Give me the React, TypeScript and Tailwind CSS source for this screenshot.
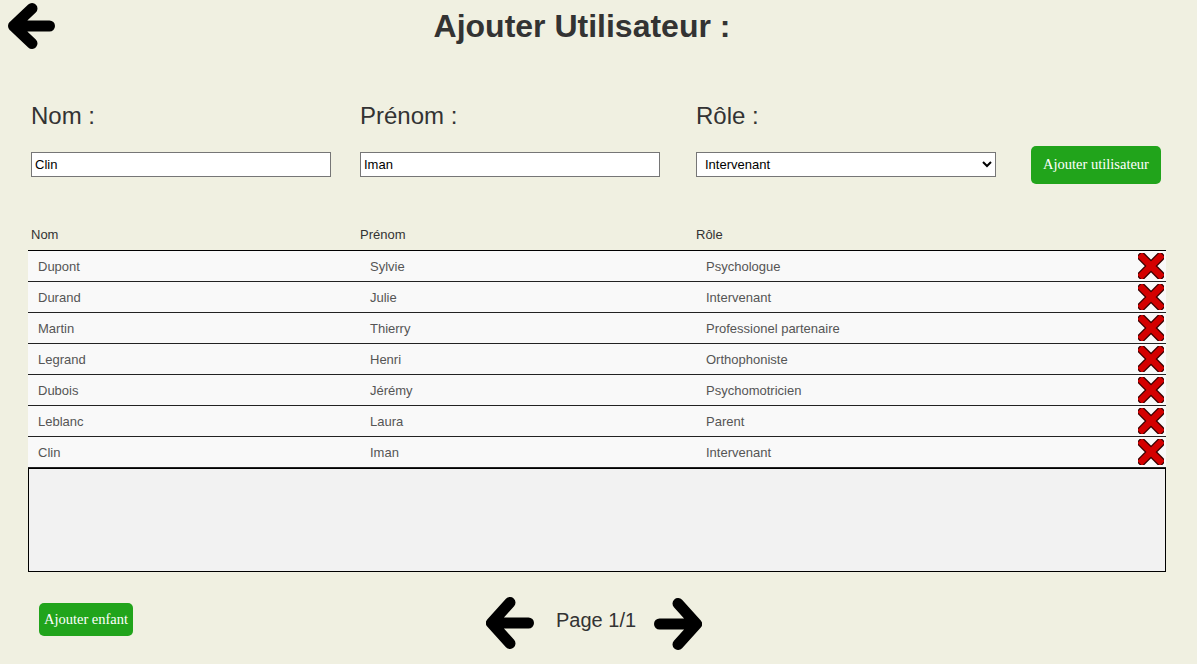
import React from "react";

const TopArrow = () => (
  <svg viewBox="0 0 60 54" className="w-[60px] h-[54px] shrink-0" fill="none">
    <path
      d="M49.5 26 H13.5 M32 8.5 L13.5 26 L32 43.5"
      stroke="#000"
      strokeWidth="11"
      strokeLinecap="round"
      strokeLinejoin="round"
    />
  </svg>
);

const NavLeft = () => (
  <svg viewBox="0 0 48 52" className="w-[48px] h-[52px] shrink-0" fill="none">
    <path
      d="M42.5 26 H5.5 M24 5.5 L5.5 26 L24 46.5"
      stroke="#000"
      strokeWidth="11"
      strokeLinecap="round"
      strokeLinejoin="round"
    />
  </svg>
);

const NavRight = () => (
  <svg viewBox="0 0 48 52" className="w-[48px] h-[52px] shrink-0" fill="none">
    <path
      d="M5.5 26 H42.5 M24 5.5 L42.5 26 L24 46.5"
      stroke="#000"
      strokeWidth="11"
      strokeLinecap="round"
      strokeLinejoin="round"
    />
  </svg>
);

const RedX = () => (
  <svg viewBox="0 0 26 26" className="w-[26px] h-[26px]">
    <path d="M4 4 L22 22 M22 4 L4 22" stroke="#3a0000" strokeWidth="9" strokeLinecap="square" />
    <path d="M4 4 L22 22 M22 4 L4 22" stroke="#d40000" strokeWidth="6.5" strokeLinecap="square" />
  </svg>
);

const users = [
  ["Dupont", "Sylvie", "Psychologue"],
  ["Durand", "Julie", "Intervenant"],
  ["Martin", "Thierry", "Professionel partenaire"],
  ["Legrand", "Henri", "Orthophoniste"],
  ["Dubois", "Jérémy", "Psychomotricien"],
  ["Leblanc", "Laura", "Parent"],
  ["Clin", "Iman", "Intervenant"],
];

export default function App() {
  const sans = { fontFamily: '"Liberation Sans", Arial, sans-serif' };
  const serif = { fontFamily: '"Liberation Serif", "Times New Roman", serif' };
  return (
    <div className="w-[1197px] h-[664px] bg-[#f0f0e1] overflow-hidden" style={sans}>
      {/* Header */}
      <div className="flex items-start h-[60px]">
        <TopArrow />
        <div className="flex-1 flex justify-center pr-[93px]">
          <h1 className="text-[32px] font-bold text-[#333] leading-[37px] mt-[8px]">
            Ajouter Utilisateur :
          </h1>
        </div>
      </div>

      {/* Form */}
      <div className="flex pl-[31px] mt-[42px] text-[#333]">
        <div className="w-[329px]">
          <div className="text-[24px] leading-[28px]">Nom :</div>
          <input
            defaultValue="Clin"
            className="mt-[22px] w-[300px] h-[25px] bg-white border border-[#767676] px-[3px] text-[13px] text-black outline-none"
          />
        </div>
        <div className="w-[336px]">
          <div className="text-[24px] leading-[28px]">Prénom :</div>
          <input
            defaultValue="Iman"
            className="mt-[22px] w-[300px] h-[25px] bg-white border border-[#767676] px-[3px] text-[13px] text-black outline-none"
          />
        </div>
        <div className="w-[335px]">
          <div className="text-[24px] leading-[28px]">Rôle :</div>
          <select
            defaultValue="Intervenant"
            className="mt-[22px] w-[300px] h-[25px] bg-white border border-[#767676] pl-[4px] text-[13px] text-black outline-none"
          >
            <option>Psychologue</option>
            <option>Intervenant</option>
            <option>Professionel partenaire</option>
            <option>Orthophoniste</option>
            <option>Psychomotricien</option>
            <option>Parent</option>
          </select>
        </div>
        <div className="flex items-end">
          <button
            className="h-[38px] w-[130px] mb-[-7px] rounded-[5px] bg-[#21a41b] text-white text-[14.5px]"
            style={serif}
          >
            Ajouter utilisateur
          </button>
        </div>
      </div>

      {/* Table */}
      <div className="ml-[28px] w-[1138px] mt-[47px]">
        <div className="flex pl-[3px] h-[26px] pb-[4px] items-center text-[13px] text-[#333]">
          <div className="w-[329px]">Nom</div>
          <div className="w-[336px]">Prénom</div>
          <div>Rôle</div>
        </div>
        <div className="border-t border-black">
          {users.map(([n, p, r]) => (
            <div key={n} className="flex h-[31px] items-center pt-[2px] bg-[#f9f9f9] border-b border-[#222] text-[13px] text-[#555]">
              <div className="w-[332px] pl-[10px]">{n}</div>
              <div className="w-[336px] pl-[10px]">{p}</div>
              <div className="w-[440px] pl-[10px]">{r}</div>
              <div className="w-[30px] flex justify-center items-center -mt-[2px]">
                <RedX />
              </div>
            </div>
          ))}
        </div>
        <div className="h-[104px] bg-[#f2f2f2] border border-black" />
      </div>

      {/* Bottom */}
      <div className="flex items-start mt-[25px]">
        <button
          className="ml-[39px] mt-[6px] h-[33px] w-[94px] rounded-[5px] bg-[#21a41b] text-white text-[14.5px]"
          style={serif}
        >
          Ajouter enfant
        </button>
        <div className="flex items-start ml-[353px]">
          <NavLeft />
          <span className="ml-[22px] mt-[12px] text-[20px] leading-[23px] text-[#333]">Page 1/1</span>
          <div className="ml-[18px] mt-[1px]">
            <NavRight />
          </div>
        </div>
      </div>
    </div>
  );
}
